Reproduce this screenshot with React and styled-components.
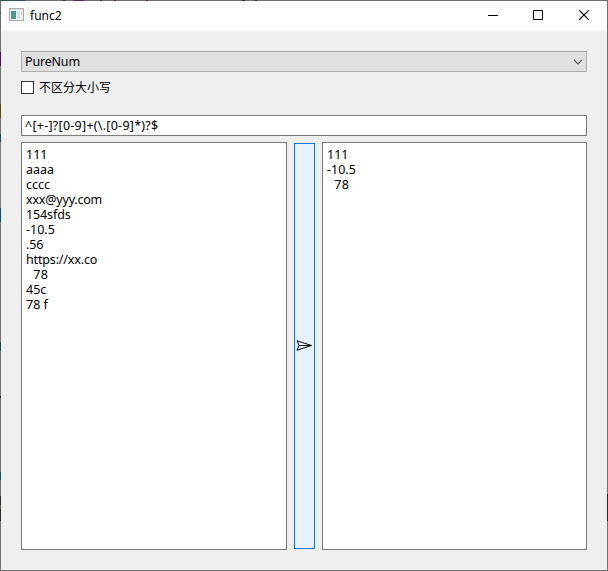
import React from 'react';
import styled, { createGlobalStyle } from 'styled-components';

const GlobalStyle = createGlobalStyle`
  * { box-sizing: border-box; }
  body { margin: 0; overflow: hidden; }
`;

const Window = styled.div`
  width: 608px;
  height: 571px;
  padding: 1px;
  display: flex;
  flex-direction: column;
  color: #000;
  font: 12.5px/15px "Noto Sans", "Noto Sans CJK SC", sans-serif;
  background:
    linear-gradient(90deg, #5b2556 0 2px, transparent 2px 14px, #5b2556 14px 16px, transparent 16px 46px, #5b2556 46px 48px, transparent 48px 142px, #1c2b45 142px 145px, transparent 145px 155px, #3a2a1a 155px 157px, transparent 157px) 100px 0 / 300px 1px no-repeat,
    linear-gradient(90deg, #2a5263 0 25px, #6f6f6f 25px 63px, #2b2b45 63px 65px, #6f6f6f 65px 73px, #5b2556 73px 84px, #6f6f6f 84px) 0 0 / 100px 1px no-repeat,
    linear-gradient(#6f6f6f 0 12px, #2a5263 12px 14px, #6f6f6f 14px 52px, #4b1050 52px 66px, #6f6f6f 66px 104px, #5a4a10 104px 118px, #6f6f6f 118px 134px, #174a5c 134px 142px, #8a7f7b 142px 208px, #10506a 208px 222px, #6f6f6f 222px 342px, #1c4b4b 342px 351px, #6f6f6f 351px 396px, #2b2b2b 396px 398px, #6f6f6f 398px 472px, #184b58 472px 480px, #6f6f6f 480px 496px, #2b2b2b 496px 505px, #4b5a38 505px 509px, #2b2b2b 509px 521px, #6f6f6f 521px) 0 0 / 1px 571px no-repeat,
    linear-gradient(#6f6f6f 0 494px, #22282c 494px 521px, #6f6f6f 521px) 607px 0 / 1px 571px no-repeat,
    #6f6f6f;
`;

const TitleBar = styled.header`
  height: 30px;
  flex: none;
  display: flex;
  align-items: center;
  padding: 0 2px 0 8px;
  background: #fff;
`;

const Title = styled.span`
  flex: 1;
  margin-left: 6px;
  margin-top: -1px;
  font-size: 12px;
`;

const CaptionButton = styled.span`
  width: 45px;
  height: 30px;
  padding: 9px 0 0 18px;
  svg { display: block; }
`;

const Content = styled.main`
  flex: 1;
  display: flex;
  flex-direction: column;
  padding: 20px;
  background: #efefef;
`;

const Combo = styled.div`
  height: 21px;
  display: flex;
  align-items: center;
  justify-content: space-between;
  padding: 0 3px;
  border: 1px solid #adadad;
  background: #e1e1e1;
  letter-spacing: -0.18px;
`;

const CheckRow = styled.label`
  height: 15px;
  margin-top: 8px;
  display: flex;
  align-items: center;
  gap: 5px;
  font-size: 12px;
`;

const CheckBox = styled.span`
  width: 13px;
  height: 13px;
  border: 1px solid #333;
  background: #fff;
`;

const LineEdit = styled.div`
  height: 21px;
  margin-top: 20px;
  padding: 2px 3px;
  border: 1px solid #7a7a7a;
  background: #fff;
  letter-spacing: 0.26px;
`;

const Panes = styled.div`
  flex: 1;
  display: grid;
  grid-template-columns: 266px 21px 265px;
  column-gap: 7px;
  margin-top: 6px;
`;

const TextPane = styled.div`
  padding: 4px;
  border: 1px solid #7a7a7a;
  background: #fff;
`;

const Line = styled.div`
  height: 15px;
  white-space: pre;
  letter-spacing: ${p => p.$spacing || 0}px;
`;

const RunButton = styled.div`
  margin: 1px 0;
  padding-bottom: 2px;
  display: flex;
  align-items: center;
  justify-content: center;
  border: 1px solid #0078d7;
  background: #e5f1fb;
`;

const IconSvg = styled.svg`
  margin-bottom: 3px;
`;

const AppIcon = () => (
  <IconSvg width="15" height="13" viewBox="0 0 15 13" shapeRendering="crispEdges">
    <defs>
      <linearGradient id="screen" x1="0" y1="0" x2="1" y2="1">
        <stop offset="0" stopColor="#4f84a8" />
        <stop offset="1" stopColor="#4fa873" />
      </linearGradient>
    </defs>
    <path fill="#a6acb3" d="M0 0h15v13H0z" />
    <path fill="#f4f5f7" d="M1 2h13v10H1z" />
    <path fill="#d3d9df" d="M1 1h13v1H1z" />
    <path fill="url(#screen)" d="M2 3h5v8H2z" />
    <path fill="#dce0e4" d="M8 3h3v8H8z" />
    <path fill="#b6d8c4" d="M12 3h1v4h-1z" />
  </IconSvg>
);

const source = [
  { text: '111' },
  { text: 'aaaa' },
  { text: 'cccc' },
  { text: 'xxx@yyy.com', spacing: -0.2 },
  { text: '154sfds', spacing: -0.12 },
  { text: '-10.5' },
  { text: '.56', spacing: -0.1 },
  { text: 'https://xx.co', spacing: -0.16 },
  { text: '  78', spacing: 0.4 },
  { text: '45c' },
  { text: '78 f' },
];
const matches = [{ text: '111' }, { text: '-10.5' }, { text: '  78', spacing: 0.4 }];

const Lines = ({ items }) =>
  items.map((item, i) => <Line key={i} $spacing={item.spacing}>{item.text}</Line>);

export default function App() {
  return (
    <Window>
      <GlobalStyle />
      <TitleBar>
        <AppIcon />
        <Title>func2</Title>
        <CaptionButton>
          <svg width="10" height="11"><path d="M0 5.5h10" stroke="#000" /></svg>
        </CaptionButton>
        <CaptionButton>
          <svg width="10" height="10"><path d="M.5.5h9v9h-9z" fill="none" stroke="#000" /></svg>
        </CaptionButton>
        <CaptionButton>
          <svg width="11" height="10"><path d="M1 0l10 10M11 0L1 10" stroke="#000" strokeWidth="1.1" /></svg>
        </CaptionButton>
      </TitleBar>
      <Content>
        <Combo>
          PureNum
          <svg width="10" height="6"><path d="M1 .8l4 4 4-4" fill="none" stroke="#555" strokeWidth="1.2" /></svg>
        </Combo>
        <CheckRow><CheckBox />不区分大小写</CheckRow>
        <LineEdit>{'^[+-]?[0-9]+(\\.[0-9]*)?$'}</LineEdit>
        <Panes>
          <TextPane><Lines items={source} /></TextPane>
          <RunButton>
            <svg width="17" height="11" viewBox="0 0 17 11">
              <path d="M1 .8L15.5 5.5 1 10.2l2-4.7zM3 5.5h12" fill="none" stroke="#000" />
            </svg>
          </RunButton>
          <TextPane><Lines items={matches} /></TextPane>
        </Panes>
      </Content>
    </Window>
  );
}
